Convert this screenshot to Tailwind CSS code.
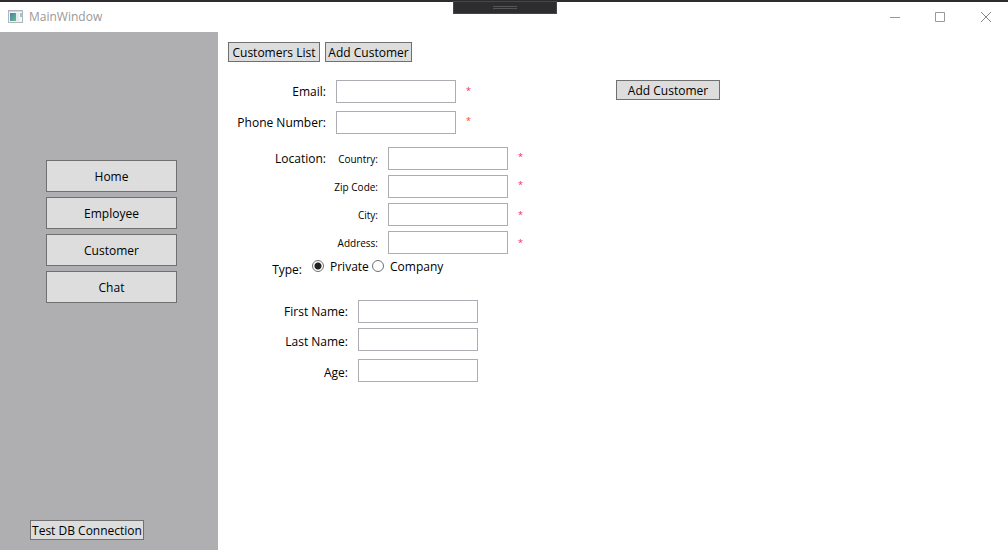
<!DOCTYPE html>
<html lang="en">
<head>
<meta charset="utf-8">
<title>MainWindow</title>
<script src="https://cdn.jsdelivr.net/npm/@tailwindcss/browser@4"></script>
</head>
<body class="flex min-h-screen flex-col bg-white font-['Open_Sans','Noto_Sans',sans-serif] text-xs leading-4 text-black">
  <header class="relative flex h-8 items-center border-t-2 border-[#2d2b2f] pl-2 text-[#999999]">
    <svg class="h-4 w-4" viewBox="0 0 16 16" aria-hidden="true" shape-rendering="crispEdges">
      <defs>
        <linearGradient id="pane" x1="0" y1="0" x2="1" y2="1"><stop offset="0" stop-color="#4a7fb0"/><stop offset="1" stop-color="#62bd84"/></linearGradient>
      </defs>
      <rect x="0.5" y="1.5" width="14" height="12" fill="#f4f5f7" stroke="#b0b5c0"/>
      <rect x="1" y="2" width="13" height="1" fill="#d3d7df"/>
      <rect x="2" y="4" width="6" height="8" fill="url(#pane)"/>
      <rect x="8" y="4" width="3" height="8" fill="#e4ecec"/>
      <rect x="12" y="4" width="2" height="4" fill="#9ccabd"/>
    </svg>
    <h1 class="ml-[5px] text-xs leading-4">MainWindow</h1>
    <div class="absolute left-[453px] -top-px flex h-[13px] w-[104px] flex-col items-center justify-center gap-px border border-[#46464a] bg-[#2d2d30]">
      <span class="h-px w-6 bg-[#555558]"></span>
      <span class="h-px w-6 bg-[#555558]"></span>
    </div>
    <div class="ml-auto flex">
      <button type="button" aria-label="Minimize" class="flex h-7 w-[45px] items-center justify-center">
        <svg class="h-[10px] w-[10px]" viewBox="0 0 10 10" fill="none" stroke="#999"><path d="M0 5.5H10"/></svg>
      </button>
      <button type="button" aria-label="Maximize" class="flex h-7 w-[46px] items-center justify-center">
        <svg class="h-[10px] w-[10px]" viewBox="0 0 10 10" fill="none" stroke="#999"><path d="M.5 .5H9.5V9.5H.5Z"/></svg>
      </button>
      <button type="button" aria-label="Close" class="flex h-7 w-[45px] items-center justify-center">
        <svg class="h-[10px] w-[10px]" viewBox="0 0 10 10" fill="none" stroke="#888"><path d="M0 0L10 10M10 0L0 10"/></svg>
      </button>
    </div>
  </header>

  <div class="flex flex-1">
    <nav class="flex w-[218px] shrink-0 flex-col bg-[#afafb1] pt-32 pb-[10px]">
      <div class="flex flex-col gap-[5px] pr-[41px] pl-[46px]">
        <button type="button" class="h-8 border border-[#707070] bg-[#dddddd] pt-0.5">Home</button>
        <button type="button" class="h-8 border border-[#707070] bg-[#dddddd] pt-0.5">Employee</button>
        <button type="button" class="h-8 border border-[#707070] bg-[#dddddd] pt-0.5">Customer</button>
        <button type="button" class="h-8 border border-[#707070] bg-[#dddddd] pt-0.5">Chat</button>
      </div>
      <button type="button" class="mt-auto ml-[30px] h-5 w-[114px] border border-[#707070] bg-[#dddddd] pt-0.5 whitespace-nowrap">Test DB Connection</button>
    </nav>

    <main class="flex-1 p-[10px]">
      <div class="flex gap-[5px]">
        <button type="button" class="h-5 w-[92px] border border-[#707070] bg-[#dddddd] pt-0.5 whitespace-nowrap">Customers List</button>
        <button type="button" class="h-5 w-[87px] border border-[#707070] bg-[#dddddd] pt-0.5 whitespace-nowrap">Add Customer</button>
      </div>

      <form class="mt-[18px] flex items-start">
        <div class="w-[388px]">
          <div class="flex flex-col gap-2">
            <div class="flex items-center">
              <label for="email" class="mr-[10px] w-[98px] text-right">Email:</label>
              <input id="email" type="text" class="h-[23px] w-[120px] border border-[#abadb3] bg-white px-1">
              <span class="ml-[10px] pb-0.5 text-[9px] text-[#ff2060]">*</span>
            </div>
            <div class="flex items-center">
              <label for="phone" class="mr-[10px] w-[98px] text-right">Phone Number:</label>
              <input id="phone" type="text" class="h-[23px] w-[120px] border border-[#abadb3] bg-white px-1">
              <span class="ml-[10px] pb-1 text-[9px] text-[#ff4020]">*</span>
            </div>
          </div>

          <div class="mt-[13px] flex" role="group" aria-labelledby="location">
            <span id="location" class="mt-1 mr-[10px] w-[98px] text-right">Location:</span>
            <div class="flex flex-col gap-[5px]">
              <div class="flex items-center">
                <label for="country" class="mr-[10px] flex w-[42px] justify-end text-[10px] whitespace-nowrap">Country:</label>
                <input id="country" type="text" class="h-[23px] w-[120px] border border-[#abadb3] bg-white px-1">
                <span class="ml-[10px] pb-1 text-[9px] text-[#ff2070]">*</span>
              </div>
              <div class="flex items-center">
                <label for="zip" class="mr-[10px] flex w-[42px] justify-end text-[10px] whitespace-nowrap">Zip Code:</label>
                <input id="zip" type="text" class="h-[23px] w-[120px] border border-[#abadb3] bg-white px-1">
                <span class="ml-[10px] pb-1 text-[9px] text-[#ff2070]">*</span>
              </div>
              <div class="flex items-center">
                <label for="city" class="mr-[10px] flex w-[42px] justify-end text-[10px] whitespace-nowrap">City:</label>
                <input id="city" type="text" class="h-[23px] w-[120px] border border-[#abadb3] bg-white px-1">
                <span class="ml-[10px] text-[9px] text-[#ff2070]">*</span>
              </div>
              <div class="flex items-center">
                <label for="address" class="mr-[10px] flex w-[42px] justify-end text-[10px] whitespace-nowrap">Address:</label>
                <input id="address" type="text" class="h-[23px] w-[120px] border border-[#abadb3] bg-white px-1">
                <span class="ml-[10px] text-[9px] text-[#ff2070]">*</span>
              </div>
            </div>
          </div>

          <div class="mt-1 flex" role="radiogroup" aria-labelledby="type">
            <span id="type" class="mt-1 mr-[10px] w-[74px] text-right">Type:</span>
            <div class="flex gap-[6px]">
              <label class="flex h-4 w-[54px] items-center gap-[6px]">
                <input type="radio" name="type" checked class="h-3 w-3 shrink-0 appearance-none rounded-full border border-[#707070] bg-white checked:bg-[radial-gradient(circle,#212121_3px,white_4px)]"><span class="pt-0.5">Private</span>
              </label>
              <label class="flex h-4 items-center gap-[6px]">
                <input type="radio" name="type" class="h-3 w-3 shrink-0 appearance-none rounded-full border border-[#707070] bg-white checked:bg-[radial-gradient(circle,#212121_3px,white_4px)]"><span class="pt-0.5">Company</span>
              </label>
            </div>
          </div>

          <div class="mt-[22px] flex flex-col">
            <div class="flex items-center">
              <label for="first" class="mr-[10px] w-[120px] text-right">First Name:</label>
              <input id="first" type="text" class="h-[23px] w-[120px] border border-[#abadb3] bg-white px-1">
            </div>
            <div class="mt-[5px] flex items-center">
              <label for="last" class="mr-[10px] w-[120px] pt-1 text-right">Last Name:</label>
              <input id="last" type="text" class="h-[23px] w-[120px] border border-[#abadb3] bg-white px-1">
            </div>
            <div class="mt-2 flex items-center">
              <label for="age" class="mr-[10px] w-[120px] pt-1 text-right">Age:</label>
              <input id="age" type="text" class="h-[23px] w-[120px] border border-[#abadb3] bg-white px-1">
            </div>
          </div>
        </div>
        <button type="submit" class="h-5 w-[104px] border border-[#707070] bg-[#dddddd] pt-0.5">Add Customer</button>
      </form>
    </main>
  </div>
</body>
</html>
